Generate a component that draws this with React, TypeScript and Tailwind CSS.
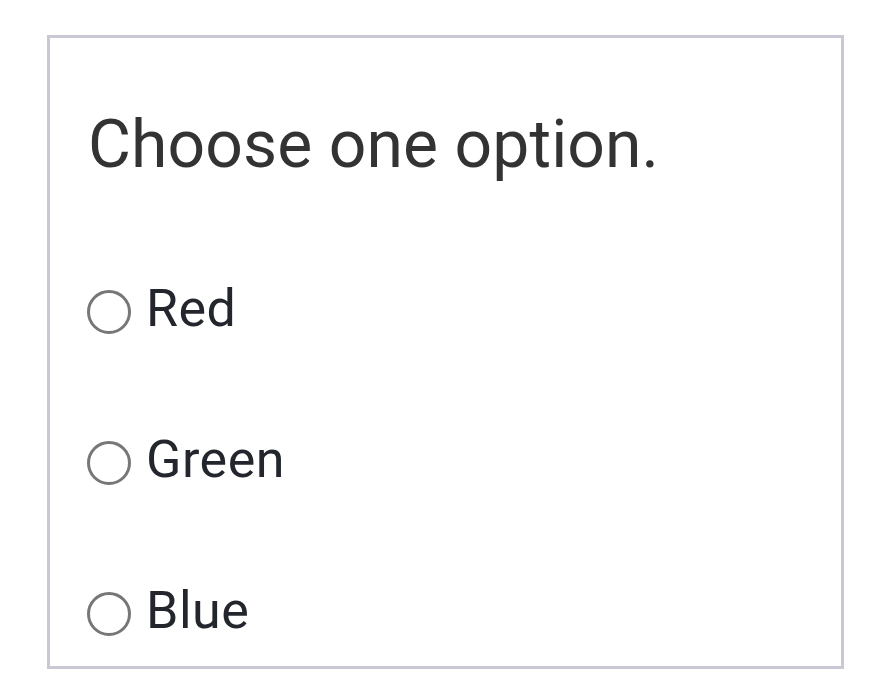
export default function App() {
  const options = ["Red", "Green", "Blue"];

  return (
    <div className="min-h-screen bg-white pl-[47px] pt-[35px]" style={{ fontFamily: "Roboto, 'Noto Sans', sans-serif" }}>
      <div className="box-border h-[634px] w-[797px] overflow-hidden border-[3px] border-[#c8c9d4] px-[38px]">
        <h1 className="mt-[74px] text-[66px] leading-[66px] font-normal tracking-[0.1px] text-[#333333]">Choose one option.</h1>
        <div className="mt-[105px] flex flex-col gap-[99px]">
          {options.map((opt) => (
            <label key={opt} className="flex h-[52px] items-center text-[52px] leading-[52px] tracking-[0.5px] text-[#23262d]">
              <span className="ml-[-1px] mr-[15px] mt-[6px] box-border h-[44px] w-[44px] shrink-0 rounded-full border-[3px] border-[#777777]" />
              {opt}
            </label>
          ))}
        </div>
      </div>
    </div>
  );
}
